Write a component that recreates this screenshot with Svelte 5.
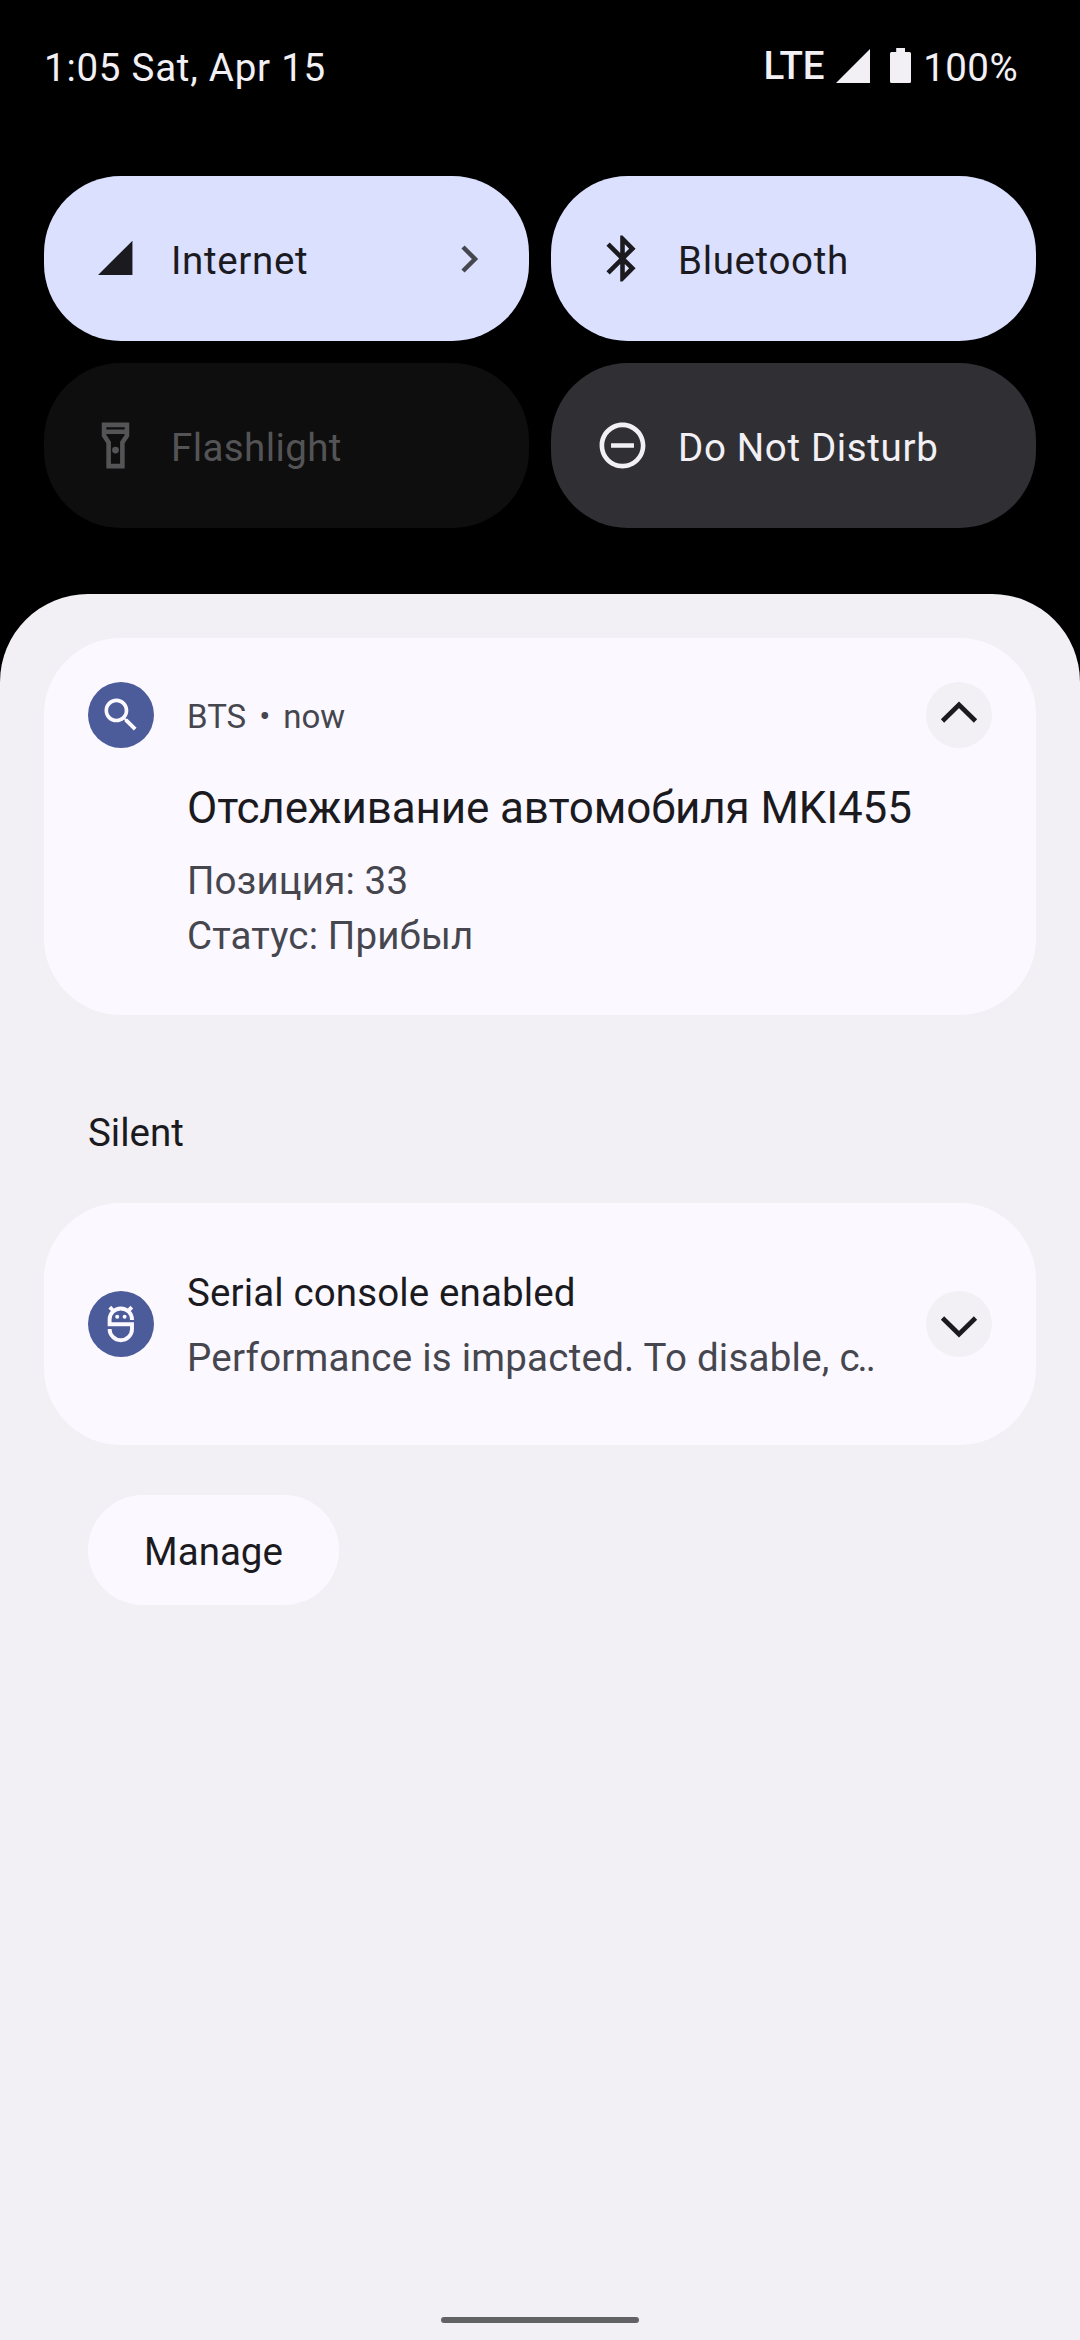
<script>
  const tiles = [
    { icon: 'signal', label: 'Internet', state: 'active', chevron: true },
    { icon: 'bluetooth', label: 'Bluetooth', state: 'active' },
    { icon: 'flashlight', label: 'Flashlight', state: 'unavailable' },
    { icon: 'dnd', label: 'Do Not Disturb', state: 'inactive' }
  ];
</script>

<div class="screen">
  <header class="status">
    <span class="clock">1:05 Sat, Apr 15</span>
    <div class="system">
      <span class="lte">LTE</span>
      <svg class="sig" viewBox="0 0 34 34"><path d="M34 0V34H0Z" /></svg>
      <svg class="bat" viewBox="0 0 21 35"><path d="M6.2 0H15V4H19.5Q21 4 21 5.5V33.5Q21 35 19.5 35H1.500Q0 35 0 33.500V5.500Q0 4 1.500 4H6.200Z" /></svg>
      <span class="pct">100%</span>
    </div>
  </header>

  <section class="tiles">
    {#each tiles as tile}
      <div class="tile {tile.state}">
        <svg class="tile-icon" viewBox="0 0 24 24">
          {#if tile.icon === 'signal'}
            <path d="M19.400 4.200V19.200H4.400Z" />
          {:else if tile.icon === 'bluetooth'}
            <path d="M17.710 7.710 12 2h-1v7.590L6.410 5 5 6.410 10.590 12 5 17.590 6.410 19 11 14.410V22h1l5.710-5.710-4.300-4.290 4.300-4.290zM13 5.830l1.880 1.880L13 9.590V5.830zm1.880 10.460L13 18.170v-3.760l1.880 1.880z" />
          {:else if tile.icon === 'flashlight'}
            <path fill-rule="evenodd" d="M6 2V8L8 11V22H16V11L18 8V2ZM16 4V5H8V4ZM14 10.400V20H10V10.400L8 7.400V7H16V7.400Z" />
            <circle cx="12" cy="14" r="1.500" />
          {:else}
            <path d="M7 11h10v2H7zM12 2C6.480 2 2 6.480 2 12s4.480 10 10 10 10-4.480 10-10S17.520 2 12 2zm0 18c-4.410 0-8-3.590-8-8s3.590-8 8-8 8 3.590 8 8-3.590 8-8 8z" />
          {/if}
        </svg>
        <span class="label">{tile.label}</span>
        {#if tile.chevron}
          <svg class="next" viewBox="0 0 18 28"><path d="M2 2 14 14 2 26" /></svg>
        {/if}
      </div>
    {/each}
  </section>

  <main class="sheet">
    <article class="card expanded">
      <div class="badge">
        <svg class="glyph" viewBox="0 0 24 24"><path d="M15.500 14h-.79l-.28-.27C15.410 12.590 16 11.110 16 9.500 16 5.910 13.090 3 9.500 3S3 5.910 3 9.500 5.910 16 9.500 16c1.610 0 3.090-.59 4.230-1.570l.27.28v.79l5 4.990L20.490 19l-4.990-5zm-6 0C7.010 14 5 11.990 5 9.500S7.010 5 9.500 5 14 7.010 14 9.500 11.990 14 9.500 14z" /></svg>
      </div>
      <div class="content">
        <div class="meta"><span>BTS</span><span class="dot">•</span><span>now</span></div>
        <h2>Отслеживание автомобиля MKI455</h2>
        <p>Позиция: 33<br />Статус: Прибыл</p>
      </div>
      <div class="toggle">
        <svg class="chev" viewBox="0 0 66 66"><path d="M16.500 39 33 22.800 49.500 39" /></svg>
      </div>
    </article>

    <h3 class="section">Silent</h3>

    <article class="card collapsed">
      <div class="badge">
        <svg class="glyph robot" viewBox="0 0 44 44">
          <path d="M33 18V17.500A11.200 11 0 0 0 10.600 17.500V22.300H33V27A11.200 11.200 0 0 1 10.600 27M10.800 5.200 14.500 9M32.800 5.200 29.100 9" />
          <circle cx="18.200" cy="14.700" r="2" /><circle cx="25.600" cy="14.700" r="2" />
        </svg>
      </div>
      <div class="content">
        <h4>Serial console enabled</h4>
        <p>Performance is impacted. To disable, <span class="cut">c..</span></p>
      </div>
      <div class="toggle">
        <svg class="chev" viewBox="0 0 66 66"><path d="M16.500 27 33 43.200 49.500 27" /></svg>
      </div>
    </article>

    <button class="manage">Manage</button>
    <div class="home"></div>
  </main>
</div>

<style>
  :global(body) { margin: 0; background: #000; }
  .screen {
    width: 1080px; height: 2340px; background: #000; overflow: hidden;
    display: flex; flex-direction: column;
    font-family: Roboto, "Noto Sans", sans-serif; font-size: 38.5px; line-height: 46px;
    color: #1b1b1f;
  }
  h2, h3, h4, p { margin: 0; font-weight: 400; white-space: nowrap; }
  svg { display: block; flex: none; fill: currentColor; }
  .status {
    height: 176px; box-sizing: border-box; padding: 45px 62px 0 44px;
    display: flex; justify-content: space-between; align-items: flex-start; color: #f2f0f5;
  }
  .system { display: flex; }
  .clock { letter-spacing: 0.75px; }
  .pct { letter-spacing: 0.4px; }
  .lte { margin: -2px 12px 0 0; font-weight: 500; letter-spacing: -0.2px; }
  .sig { width: 34px; height: 34px; margin: 4px 20px 0 0; }
  .bat { width: 21px; height: 35px; margin: 3px 12px 0 0; }
  .tiles {
    padding: 0 44px; display: grid; grid-template-columns: 485px 485px; gap: 22px; margin-bottom: 66px;
  }
  .tile {
    height: 165px; box-sizing: border-box; border-radius: 77px; padding: 0 50px 0 44px;
    display: flex; align-items: center;
  }
  .active { background: #dce0ff; color: #1b1b1f; }
  .inactive { background: #303034; color: #f2f0f5; }
  .unavailable { background: #0e0e0e; color: #545456; }
  .tile-icon { width: 55px; height: 55px; margin-right: 28px; }
  .label { flex: 1; padding-top: 4px; letter-spacing: 0.650px; }
  .unavailable .label { letter-spacing: 0.4px; }
  .next { width: 18px; height: 28px; fill: none; stroke: #46464f; stroke-width: 4.500px; }
  .sheet {
    flex: 1; background: #f2f0f5; border-radius: 88px 88px 0 0; padding: 44px 44px 0;
    display: flex; flex-direction: column; align-items: flex-start;
  }
  .card {
    width: 992px; box-sizing: border-box; border-radius: 77px; background: #fbf9ff; padding: 0 44px;
    display: flex;
  }
  .expanded { height: 377px; padding-top: 44px; }
  .collapsed { height: 242px; align-items: center; }
  .badge, .toggle { width: 66px; height: 66px; flex: none; border-radius: 50%; }
  .badge { background: #4c5b99; color: #fbf9ff; display: flex; align-items: center; justify-content: center; margin-right: 33px; }
  .glyph { width: 44px; height: 44px; }
  .robot path { fill: none; stroke: currentColor; stroke-width: 3.900px; }
  .toggle { background: #f2f0f5; }
  .chev { width: 66px; height: 66px; fill: none; stroke: #1b1b1f; stroke-width: 4.700px; }
  .content { flex: 1; min-width: 0; }
  .content p { color: #46464f; letter-spacing: 0.150px; }
  .meta { display: flex; height: 40px; line-height: 40px; margin-top: 15px; font-size: 33px; color: #46464f; }
  .dot { margin: 0 13px; }
  h2 { font-size: 44px; line-height: 52px; margin-top: 45px; letter-spacing: -0.130px; }
  .expanded p { line-height: 55px; margin-top: 19px; }
  h4 { font-size: 38.500px; line-height: 65px; padding-top: 2px; letter-spacing: 0.130px; }
  .collapsed p { line-height: 65px; padding-bottom: 1px; letter-spacing: 0.240px; }
  .cut { letter-spacing: -2px; }
  .section { font-size: 38.500px; line-height: 46px; margin: 95px 0 47px 44px; }
  .manage {
    width: 251px; height: 110px; margin: 50px 0 0 44px; border: 0; border-radius: 55px; padding: 4px 0 0;
    background: #fbf9ff; color: #1b1b1f; font: inherit;
  }
  .home { width: 198px; height: 6px; border-radius: 3px; background: #626264; margin: auto auto 17px; }
</style>
